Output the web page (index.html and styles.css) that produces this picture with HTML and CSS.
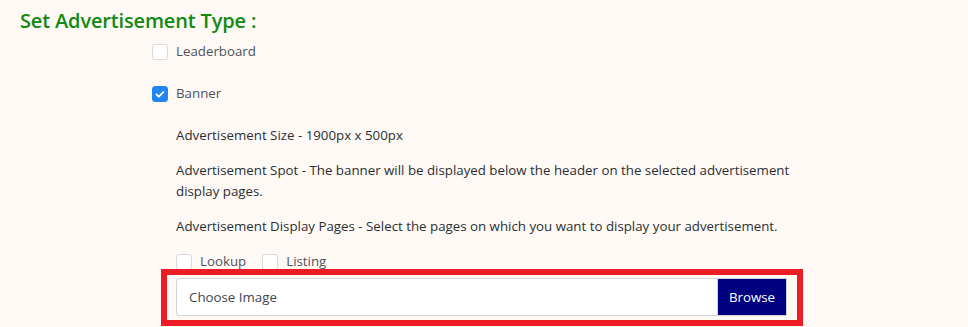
FILE: index.html
```html
<!DOCTYPE html>
<html lang="en">
<head>
    <meta charset="UTF-8">
    <meta name="viewport" content="width=device-width, initial-scale=1.0">
    <title>Set Advertisement Type</title>
    <link rel="stylesheet" href="styles.css">
</head>
<body>
    <div class="page">
        <h2 class="title">Set Advertisement Type :</h2>

        <div class="ad-types">
            <label class="form-check">
                <span class="check"></span>
                <span class="check-label">Leaderboard</span>
            </label>

            <label class="form-check">
                <span class="check checked">
                    <svg viewBox="0 0 16 16" width="16" height="16"><path d="M4 8.3l2.6 2.6L12 5.5" fill="none" stroke="#fff" stroke-width="2" stroke-linecap="round" stroke-linejoin="round"/></svg>
                </span>
                <span class="check-label">Banner</span>
            </label>

            <div class="banner-details">
                <p>Advertisement Size - 1900px x 500px</p>
                <p>Advertisement Spot - The banner will be displayed below the header on the selected advertisement display pages.</p>
                <p>Advertisement Display Pages - Select the pages on which you want to display your advertisement.</p>

                <div class="display-pages">
                    <label class="form-check inline">
                        <span class="check"></span>
                        <span class="check-label">Lookup</span>
                    </label>
                    <label class="form-check inline">
                        <span class="check"></span>
                        <span class="check-label">Listing</span>
                    </label>
                </div>
            </div>

            <div class="upload-box">
                <div class="input-group">
                    <div class="file-input">Choose Image</div>
                    <button class="browse-btn">Browse</button>
                </div>
            </div>
        </div>
    </div>
</body>
</html>
```

FILE: styles.css
```css
body {
    margin: 0;
    background-color: #fef9f5;
    font-family: "Open Sans", "Noto Sans", sans-serif;
    font-size: 13.3px;
    color: #2b2f33;
}

.page {
    padding: 8px 20px 0 20px;
}

.title {
    margin: 0;
    font-size: 20px;
    line-height: 26px;
    font-weight: 600;
    letter-spacing: -0.15px;
    color: #118a11;
}

.ad-types {
    padding-left: 132px;
    margin-top: 7px;
}

.form-check {
    display: flex;
    align-items: center;
    height: 21px;
    line-height: 21px;
    margin-bottom: 21px;
}

.check {
    width: 14px;
    height: 14px;
    border: 1px solid #d9d9dc;
    border-radius: 3px;
    background-color: #fff;
    margin-right: 8px;
    display: flex;
    align-items: center;
    justify-content: center;
    flex-shrink: 0;
}

.check.checked {
    background-color: #2186f4;
    border-color: #2186f4;
}

.check-label {
    color: #50545a;
}

.banner-details {
    padding-left: 24px;
    width: 625px;
}

.banner-details p {
    margin: 0 0 14px 0;
    line-height: 21px;
}

.display-pages {
    display: flex;
    gap: 16px;
    margin-top: 2px;
}

.form-check.inline {
    margin-bottom: 0;
}

.upload-box {
    margin-top: -3px;
    margin-left: 9px;
    width: 611px;
    border: 6px solid #ec1c24;
    padding: 3px 10px 4px 9px;
    position: relative;
}

.input-group {
    display: flex;
    height: 38px;
}

.file-input {
    flex: 1;
    background-color: #fff;
    border: 1px solid #d3d3db;
    border-right: none;
    border-radius: 4px 0 0 4px;
    padding: 0 12px;
    line-height: 36px;
    color: #3e4650;
}

.browse-btn {
    width: 70px;
    background-color: #000080;
    color: #fff;
    border: 1px solid #d3d3db;
    font-family: inherit;
    font-size: 13.3px;
    padding: 0;
}
```
